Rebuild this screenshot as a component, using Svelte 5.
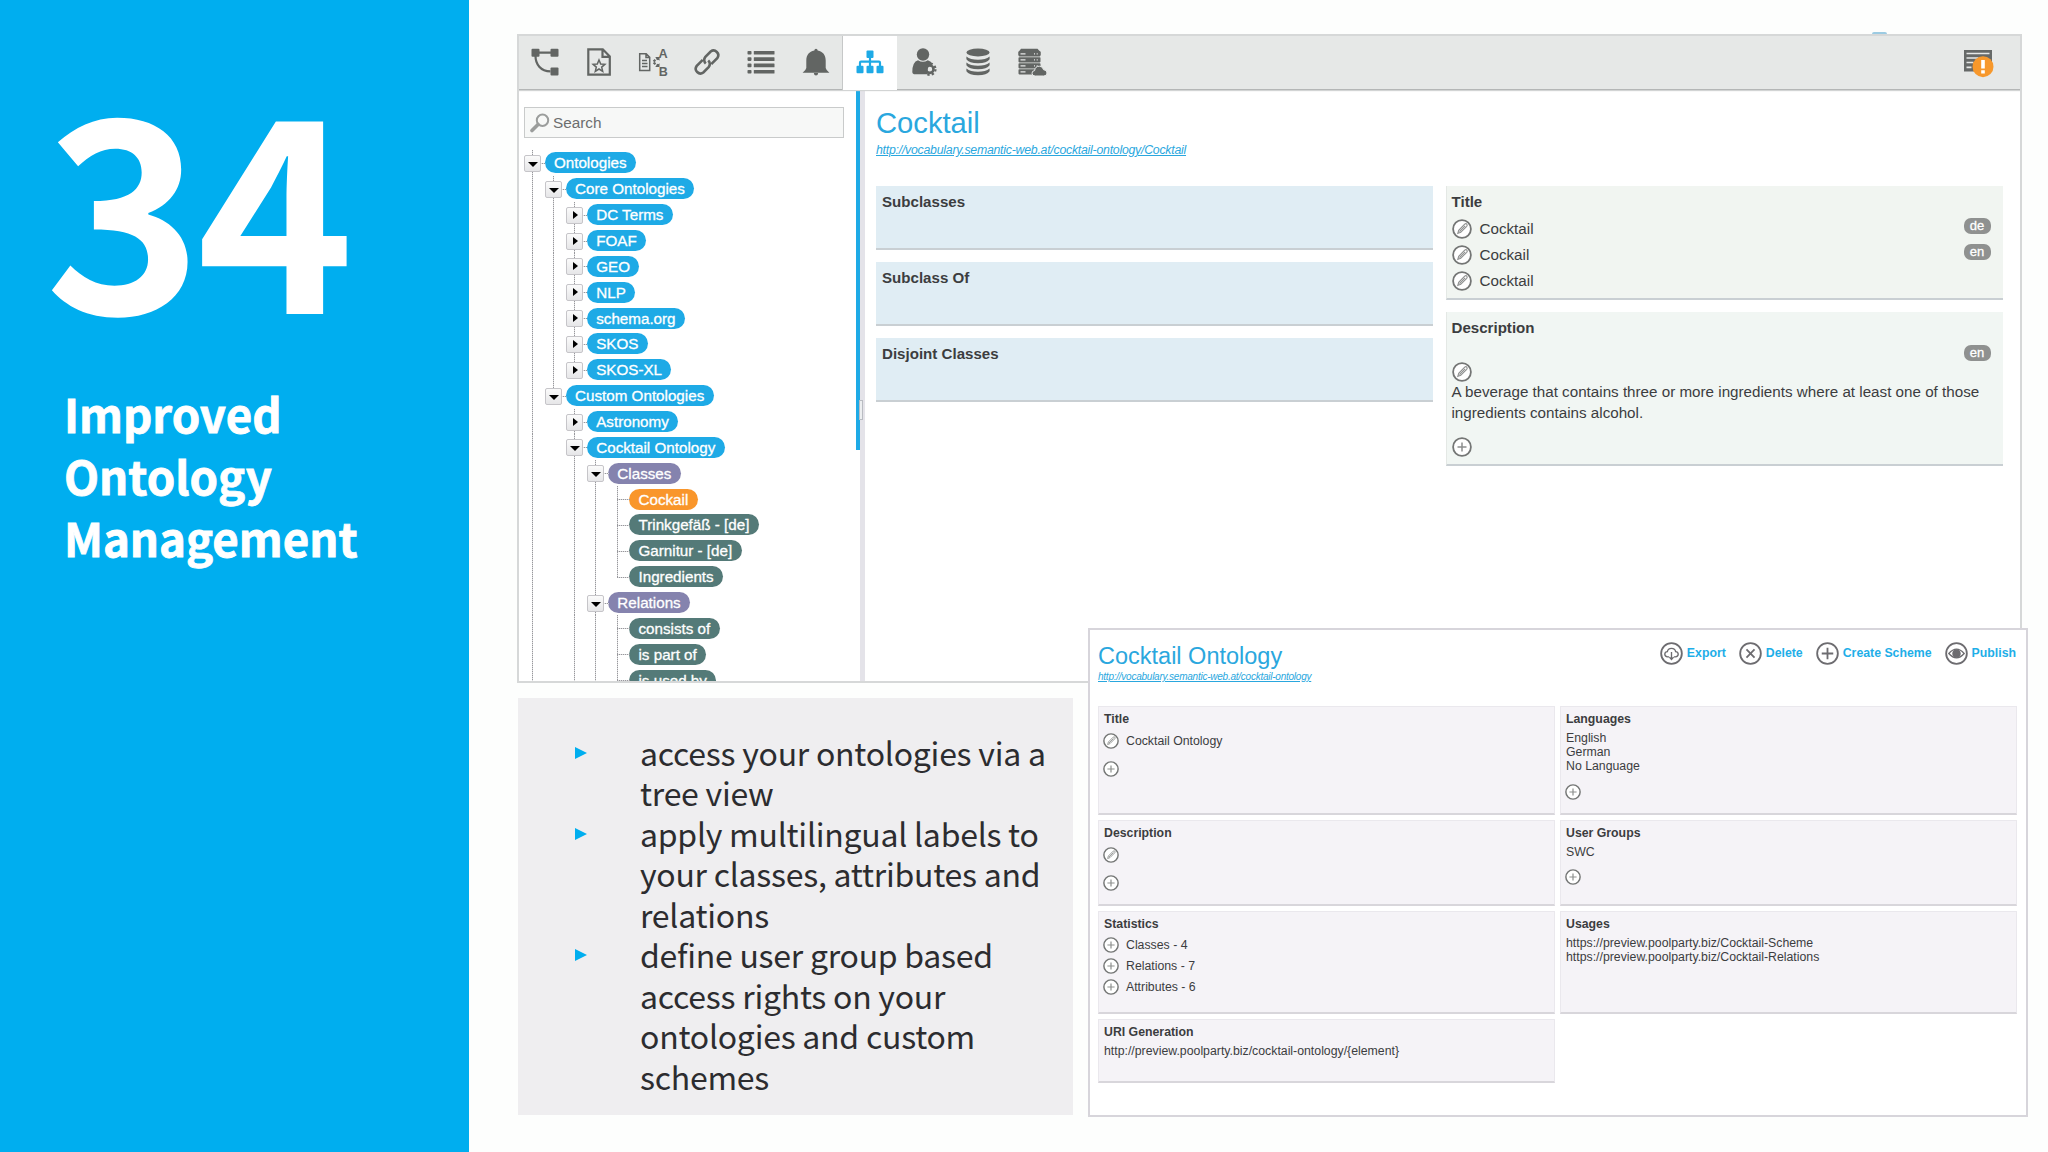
<script lang="ts">
  // guides: one character per tree column, '|' draws the dotted line, '.' leaves it empty
  type Row = { label: string; kind: string; guides: string; toggle: '' | 'open' | 'shut'; end?: boolean }

  const rows: Row[] = [
    { label: 'Ontologies', kind: 'blue', guides: '', toggle: 'open' },
    { label: 'Core Ontologies', kind: 'blue', guides: '|', toggle: 'open' },
    { label: 'DC Terms', kind: 'blue', guides: '||', toggle: 'shut' },
    { label: 'FOAF', kind: 'blue', guides: '||', toggle: 'shut' },
    { label: 'GEO', kind: 'blue', guides: '||', toggle: 'shut' },
    { label: 'NLP', kind: 'blue', guides: '||', toggle: 'shut' },
    { label: 'schema.org', kind: 'blue', guides: '||', toggle: 'shut' },
    { label: 'SKOS', kind: 'blue', guides: '||', toggle: 'shut' },
    { label: 'SKOS-XL', kind: 'blue', guides: '||', toggle: 'shut', end: true },
    { label: 'Custom Ontologies', kind: 'blue', guides: '|', toggle: 'open', end: true },
    { label: 'Astronomy', kind: 'blue', guides: '|.', toggle: 'shut' },
    { label: 'Cocktail Ontology', kind: 'blue', guides: '|.', toggle: 'open' },
    { label: 'Classes', kind: 'purple', guides: '|.|', toggle: 'open' },
    { label: 'Cockail', kind: 'orange', guides: '|.||', toggle: '' },
    { label: 'Trinkgefäß - [de]', kind: 'teal', guides: '|.||', toggle: '' },
    { label: 'Garnitur - [de]', kind: 'teal', guides: '|.||', toggle: '' },
    { label: 'Ingredients', kind: 'teal', guides: '|.||', toggle: '', end: true },
    { label: 'Relations', kind: 'purple', guides: '|.|', toggle: 'open' },
    { label: 'consists of', kind: 'teal', guides: '|.||', toggle: '' },
    { label: 'is part of', kind: 'teal', guides: '|.||', toggle: '' },
    { label: 'is used by', kind: 'teal', guides: '|.||', toggle: '' },
  ]

  const tools = ['graph', 'starred', 'translate', 'link', 'list', 'bell', 'sitemap', 'user', 'database', 'server']
  const relations = ['Subclasses', 'Subclass Of', 'Disjoint Classes']
  const titles = [
    { text: 'Cocktail', lang: 'de' },
    { text: 'Cockail', lang: 'en' },
    { text: 'Cocktail', lang: '' },
  ]
  const actions = [
    { icon: 'cloud', label: 'Export' },
    { icon: 'cross', label: 'Delete' },
    { icon: 'plus', label: 'Create Scheme' },
    { icon: 'eye', label: 'Publish' },
  ]
  const stats = ['Classes - 4', 'Relations - 7', 'Attributes - 6']
</script>

{#snippet edit()}
  <svg class="round" viewBox="0 0 20 20">
    <circle cx="10" cy="10" r="8.9" />
    <path class="pencil" d="M5.8 14.4l.9-3.1 6-6.1q1.2-1 2.1 0t-.1 2.1l-6 6z" />
    <path class="pencil" d="M7.5 12.6l5.6-5.7" />
  </svg>
{/snippet}

{#snippet plus()}
  <svg class="round" viewBox="0 0 20 20">
    <circle cx="10" cy="10" r="8.9" />
    <path class="cross" d="M10 5.5v9M5.5 10h9" />
  </svg>
{/snippet}

{#snippet toolIcon(name: string)}
  <svg class="tool-icon" viewBox="0 0 32 32">
    {#if name === 'graph'}
      <rect x="2.5" y="2.7" width="8" height="8" rx="1" />
      <rect x="21.5" y="2.7" width="8" height="8" rx="1" />
      <rect x="21.5" y="21.5" width="8" height="8" rx="1" />
      <path class="line" d="M10 6.7h12M6.5 10c0 8 5 15.3 15 15.3" />
    {:else if name === 'starred'}
      <path class="line" d="M5.3 3.3h14.5l7 7.2v18.2H5.3zM19.5 3.5v7.3h7" />
      <path class="line thin" d="M16 14l1.7 4 4.2.3-3.2 2.8 1 4.2-3.7-2.3-3.7 2.3 1-4.2-3.2-2.8 4.2-.3z" />
    {:else if name === 'translate'}
      <path class="line thin" d="M2.7 7.7h6.5l3.5 3.7v13H2.7zM9 8v3.6h3.5M5 14.5h5M5 17.5h5.5M5 20.5h5.500" />
      <path class="line" d="M22 12.5c-3 .5-4.5 2-5.8 3.500 1.3 1.5 2.8 3 5.8 3.5" stroke-dasharray="2.5 1.3" />
      <path d="M18 11h4.500v3.800zM18 21h4.500v-3.800z" />
      <text x="21.500" y="11.700" font-size="12.700">A</text>
      <text x="21.700" y="29.700" font-size="12.500">B</text>
    {:else if name === 'link'}
      <g transform="rotate(-45 16 16)">
        <path class="line bold" d="M14.5 11.5H6a4.7 4.7 0 0 0 0 9.3h7.5a4.7 4.7 0 0 0 4.4-5" />
        <path class="line bold" d="M17.5 20.5H26a4.7 4.7 0 0 0 0-9.3h-7.5a4.7 4.7 0 0 0-4.4 5" />
      </g>
    {:else if name === 'list'}
      {#each [5, 11.3, 17.6, 23.9] as y}
        <rect x="2.5" {y} width="4" height="3.6" rx=".8" />
        <rect x="8.8" {y} width="20.7" height="3.6" rx=".5" />
      {/each}
    {:else if name === 'bell'}
      <path d="M16 2.7q1.5 0 1.7 1.8c5.2 1 8 4.5 8 10v7.5q.3 2 3.7 4.7H2.6q3.4-2.7 3.7-4.7v-7.5c0-5.5 2.8-9 8-10q.2-1.8 1.7-1.8zM13.8 27h4.4q-.3 2.500-2.2 2.500T13.8 27z" />
    {:else if name === 'sitemap'}
      <rect x="12.500" y="4.500" width="7" height="7.500" rx="1" />
      <rect x="2.500" y="19.800" width="7" height="7.500" rx="1" />
      <rect x="12.500" y="19.800" width="7" height="7.500" rx="1" />
      <rect x="22.500" y="19.800" width="7" height="7.500" rx="1" />
      <path class="line" d="M16 11v9M6 20v-3.300q0-1 1-1h18q1 0 1 1V20" />
    {:else if name === 'user'}
      <circle cx="15" cy="8.500" r="6.200" />
      <path d="M10 14.2q5 3.3 9.8 0 3.6 1 4.5 4-6 1.8-4.500 10H6q-1.500-.3-1.700-2 0-10.500 5.700-12z" />
      <circle class="line bold" cx="21.800" cy="23.200" r="3.700" />
      <circle class="line" cx="21.800" cy="23.200" r="5.700" stroke-dasharray="2.300 2.176" />
    {:else if name === 'database'}
      <ellipse cx="16" cy="6.500" rx="11.600" ry="3.900" />
      {#each [10, 16, 22] as y}
        <path transform="translate(0 {y})" d="M4.4.5q4 3.3 11.6 3.3T27.6.5v2.7q-2.6 4.1-11.6 4.1T4.4 3.2z" />
      {/each}
    {:else if name === 'server'}
      <path d="M5 2.700h16.500l3 3.300v3H2.500V6z" />
      {#each [5.2, 11.2, 17.2, 23.2] as y}
        <rect x="2.500" {y} width="22" height="5.200" rx=".8" />
        <path class="slot" d="M4.500 {y + 2.7}h5M18 {y + 2.7}h1M20.700 {y + 2.7}h1" />
      {/each}
      <path class="cloud" d="M19.3 30q-3.3 0-3.3-2.8 0-2.4 2.6-2.6.5-4.4 4.7-4.4 3.5 0 4.2 3.5 3.5.2 3.5 3.3 0 3-3.3 3z" />
    {/if}
  </svg>
{/snippet}

<div class="slide">
  <section class="cover">
    <div class="number">34</div>
    <h1>Improved<br />Ontology<br />Management</h1>
  </section>

  <section class="content">
    <div class="window">
      <div class="toolbar">
        {#each tools as name}
          <div class="tool" class:active={name === 'sitemap'}>{@render toolIcon(name)}</div>
        {/each}
        <svg class="notice" viewBox="0 0 30 28">
          <path fill="#666968" d="M0 0h28v21.5H0z" />
          <path stroke="#e6e8e7" stroke-width="1.7" d="M2.5 3.5h23M2.5 8h12M2.5 12.5h7M2.5 17.3h5" />
          <circle cx="19" cy="16.7" r="10.5" fill="#f7982c" />
          <path stroke="#fff" stroke-width="3.6" d="M19 10v8.5M19 20.2v3.3" />
        </svg>
      </div>
      <div class="panes">
        <aside class="sidebar">
          <div class="search">
            <svg class="lens" viewBox="0 0 20 20">
              <circle cx="12.5" cy="7.3" r="5.7" />
              <path d="M8 11.5l-6 6" />
            </svg>
            <span>Search</span>
          </div>
          <div class="tree">
            {#each rows as row}
              <div class="row">
                {#each row.guides as g}
                  <span class="col" class:guide={g === '|'}></span>
                {/each}
                <span class="col branch guide" class:half={row.end}>
                  {#if row.toggle}
                    <span class="toggle {row.toggle}"></span>
                  {/if}
                </span>
                <span class="pill {row.kind}">{row.label}</span>
              </div>
            {/each}
          </div>
        </aside>
        <div class="splitter"><span class="track"></span><span class="grip"></span></div>
        <main class="detail">
          <h2>Cocktail</h2>
          <span class="uri">http://vocabulary.semantic-web.at/cocktail-ontology/Cocktail</span>
          <div class="boxes">
            <div class="stack">
              {#each relations as name}
                <div class="box relation"><h3>{name}</h3></div>
              {/each}
            </div>
            <div class="stack">
              <div class="box label-box">
                <h3>Title</h3>
                {#each titles as t}
                  <div class="entry">
                    {@render edit()}
                    <span>{t.text}</span>
                    {#if t.lang}<span class="lang">{t.lang}</span>{/if}
                  </div>
                {/each}
              </div>
              <div class="box desc-box">
                <h3>Description</h3>
                <div class="lang-line"><span class="lang">en</span></div>
                {@render edit()}
                <p>A beverage that contains three or more ingredients where at least one of those<br />ingredients contains alcohol.</p>
                {@render plus()}
              </div>
            </div>
          </div>
        </main>
      </div>
    </div>

    <ul class="points">
      <li>access your ontologies via a<br />tree view</li>
      <li>apply multilingual labels to<br />your classes, attributes and<br />relations</li>
      <li>define user group based<br />access rights on your<br />ontologies and custom<br />schemes</li>
    </ul>
  </section>

  <span class="dot"></span>

  <div class="popup">
    <header>
      <div>
        <h2>Cocktail Ontology</h2>
        <span class="uri">http://vocabulary.semantic-web.at/cocktail-ontology</span>
      </div>
      <div class="actions">
        {#each actions as a}
          <span class="action">
            <svg class="action-icon" viewBox="0 0 24 24">
              <circle cx="12" cy="12" r="10.8" />
              {#if a.icon === 'cloud'}
                <path class="fine" d="M9.5 15.5H8q-3-.2-3-2.7t2.7-2.7Q8.2 6.7 12 6.7t4.3 3.4Q19 10.3 19 12.8t-3 2.7h-1.5" />
                <path class="fine" d="M12 10.5v7.5M9.8 15.8L12 18.2l2.2-2.4" />
              {:else if a.icon === 'cross'}
                <path d="M7.8 7.8l8.4 8.4M16.2 7.8l-8.4 8.4" />
              {:else if a.icon === 'plus'}
                <path d="M12 6v12M6 12h12" />
              {:else}
                <path class="fine" d="M4 12q8-9 16 0-8 9-16 0z" />
                <circle class="pupil" cx="12" cy="12" r="3.5" />
              {/if}
            </svg>
            {a.label}
          </span>
        {/each}
      </div>
    </header>
    <div class="cards">
      <div class="card">
        <h3>Title</h3>
        <div class="entry first">{@render edit()}<span>Cocktail Ontology</span></div>
        <div class="entry gap-a">{@render plus()}</div>
      </div>
      <div class="card">
        <h3>Languages</h3>
        <p>English<br />German<br />No Language</p>
        <div class="entry gap-b">{@render plus()}</div>
      </div>
      <div class="card">
        <h3>Description</h3>
        <div class="entry first">{@render edit()}</div>
        <div class="entry gap-a">{@render plus()}</div>
      </div>
      <div class="card">
        <h3>User Groups</h3>
        <p>SWC</p>
        <div class="entry gap-b">{@render plus()}</div>
      </div>
      <div class="card">
        <h3>Statistics</h3>
        <div class="stats">
          {#each stats as s}
            <div class="entry">{@render plus()}<span>{s}</span></div>
          {/each}
        </div>
      </div>
      <div class="card">
        <h3>Usages</h3>
        <p>https://preview.poolparty.biz/Cocktail-Scheme<br />https://preview.poolparty.biz/Cocktail-Relations</p>
      </div>
      <div class="card">
        <h3>URI Generation</h3>
        <p>http://preview.poolparty.biz/cocktail-ontology/&#123;element&#125;</p>
      </div>
    </div>
  </div>
</div>

<style>
  :global(body) {
    margin: 0;
    background: #fdfefd;
  }
  .slide {
    position: relative;
    display: flex;
    width: 2048px;
    height: 1152px;
    overflow: hidden;
    background: #fdfefd;
    font-family: 'Liberation Sans', Arial, sans-serif;
    color: #3c3d3f;
  }
  h1, h2, h3, p, ul {
    margin: 0;
    padding: 0;
    font-weight: normal;
  }

  /* blue cover column */
  .cover {
    box-sizing: border-box;
    width: 469px;
    padding-top: 64px;
    background: #00aeef;
    color: #fff;
    font-family: 'Noto Sans CJK SC', sans-serif;
    flex-shrink: 0;
  }
  .number {
    margin-left: 45px;
    font-size: 267px;
    line-height: 267px;
    font-weight: 700;
    letter-spacing: -6px;
  }
  h1 {
    margin: 51px 0 0 64px;
    font-size: 45.6px;
    line-height: 62px;
    font-weight: 700;
    -webkit-text-stroke: 0.8px #fff;
  }

  .content {
    display: flex;
    flex-direction: column;
    padding: 34px 0 0 48px;
  }
  .window {
    box-sizing: border-box;
    width: 1505px;
    height: 649px;
    border: 2px solid #d6d8d8;
    background: #fff;
    overflow: hidden;
  }
  .toolbar {
    display: flex;
    align-items: center;
    box-sizing: border-box;
    height: 54px;
    background: #e6e8e7;
    border-bottom: 1px solid #b4b6b6;
    box-shadow: 0 1px 1px #d2d4d4;
    position: relative;
    z-index: 1;
  }
  .tool {
    display: flex;
    align-items: center;
    justify-content: center;
    width: 54.1px;
    height: 54px;
    position: relative;
    left: -1px;
  }
  .tool.active {
    background: #fff;
    box-shadow: -1px 0 0 #c6c8c8;
  }
  .tool-icon {
    width: 32px;
    height: 32px;
    margin-bottom: 2px;
    fill: #626563;
    stroke: none;
  }
  .active .tool-icon {
    fill: #1eaae6;
  }
  .tool-icon .line {
    fill: none;
    stroke: #626563;
    stroke-width: 2.2;
  }
  .active .tool-icon .line {
    stroke: #1eaae6;
  }
  .tool-icon .line.thin {
    stroke-width: 1.5;
  }
  .tool-icon .line.bold {
    stroke-width: 2.6;
  }
  .tool-icon text {
    font-weight: 700;
  }
  .slot {
    stroke: #e6e8e7;
    stroke-width: 1.2;
  }
  .cloud {
    stroke: #e6e8e7;
    stroke-width: 1;
  }
  .notice {
    width: 30px;
    height: 28px;
    margin: 3px 26px 0 auto;
  }

  .panes {
    display: flex;
    height: 591px;
  }
  .sidebar {
    width: 337px;
    flex-shrink: 0;
  }
  .search {
    display: flex;
    align-items: center;
    gap: 3px;
    box-sizing: border-box;
    width: 320px;
    height: 31px;
    margin: 17px 0 0 5px;
    padding-left: 5px;
    border: 1px solid #c9cbcb;
    background: #f7f8f7;
    font-size: 15.3px;
    color: #6c6e6e;
  }
  .lens {
    width: 20px;
    height: 20px;
    fill: none;
    stroke: #9b9d9c;
    stroke-width: 2;
  }
  .lens path {
    stroke-width: 3.6;
    stroke-linecap: round;
  }
  .tree {
    margin: 12px 0 0 3px;
  }
  .row {
    display: flex;
    align-items: center;
    height: 25.86px;
  }
  .col {
    position: relative;
    width: 21.15px;
    height: 100%;
    flex-shrink: 0;
  }
  .col.guide::before {
    content: '';
    position: absolute;
    left: 10px;
    top: 0;
    width: 1px;
    height: 100%;
    background: repeating-linear-gradient(#98989c 0 1px, #dcdcde 1px 2px);
  }
  .col.half::before {
    height: 50%;
  }
  .branch {
    margin-right: 1.5px;
  }
  .branch::after {
    content: '';
    position: absolute;
    left: 10px;
    right: -2px;
    top: 50%;
    height: 1px;
    background: repeating-linear-gradient(to right, #98989c 0 1px, #dcdcde 1px 2px);
  }
  .toggle {
    position: absolute;
    z-index: 1;
    left: 2px;
    top: 5px;
    width: 15px;
    height: 15px;
    border: 1px solid #c6c5c9;
    border-radius: 2px;
    background: linear-gradient(#fbfbfb, #e6e6e8);
  }
  .toggle::after {
    content: '';
    position: absolute;
  }
  .toggle.open::after {
    left: 3px;
    top: 6px;
    border: 5px solid transparent;
    border-top: 5px solid #000;
    border-bottom: 0;
  }
  .toggle.shut::after {
    left: 6px;
    top: 3px;
    border: 4.5px solid transparent;
    border-left: 5px solid #000;
    border-right: 0;
  }
  .pill {
    height: 21px;
    line-height: 21px;
    padding: 0 9.3px;
    border-radius: 11px;
    font-size: 15.2px;
    color: #fff;
    white-space: nowrap;
    -webkit-text-stroke: 0.3px #fff;
  }
  .pill.blue {
    background: #1eaae6;
  }
  .pill.purple {
    background: #8583ae;
  }
  .pill.orange {
    background: #f9962b;
  }
  .pill.teal {
    background: #547a78;
  }

  .splitter {
    position: relative;
    width: 9px;
    background: #e4e3e9;
    flex-shrink: 0;
  }
  .track {
    display: block;
    width: 4px;
    height: 360px;
    background: #1eaae6;
  }
  .splitter::after {
    content: '';
    position: absolute;
    left: 0;
    top: 360px;
    bottom: 0;
    width: 4px;
    background: #fff;
  }
  .grip {
    position: absolute;
    z-index: 1;
    left: 3px;
    top: 310px;
    width: 2px;
    height: 18px;
    border: 1px solid #b9bcc2;
    background: #eceef0;
  }

  .detail {
    padding: 17px 0 0 11px;
  }
  h2 {
    font-size: 29.2px;
    line-height: 33px;
    color: #2aa7de;
  }
  .uri {
    display: block;
    padding-top: 3px;
    font-size: 12.3px;
    line-height: 14px;
    letter-spacing: -0.24px;
    font-style: italic;
    text-decoration: underline;
    color: #2aa7de;
  }
  .boxes {
    display: flex;
    gap: 12.5px;
    margin-top: 29px;
  }
  .stack {
    display: flex;
    flex-direction: column;
    gap: 12.2px;
    width: 557px;
  }
  .box {
    box-sizing: border-box;
    padding: 0 6px;
    border-bottom: 2px solid #c9cfd3;
    font-size: 15.2px;
  }
  .relation {
    height: 64px;
    background: #e0edf4;
  }
  .box h3 {
    padding-top: 7px;
    font-size: 15.1px;
    line-height: 18px;
    font-weight: 700;
  }
  .label-box,
  .desc-box {
    padding-left: 5px;
    background: #f1f5f1;
    border-left: 1px solid #e4e8e5;
  }
  .label-box {
    height: 114px;
  }
  .desc-box {
    height: 154px;
    background: #f1f6f3;
  }
  .label-box h3 {
    padding-bottom: 5px;
  }
  .entry {
    display: flex;
    align-items: center;
  }
  .label-box .entry {
    height: 25.86px;
    gap: 8px;
  }
  .round {
    display: block;
    width: 20px;
    height: 20px;
    fill: #fff;
    stroke: #747675;
    stroke-width: 1.8;
    flex-shrink: 0;
  }
  .round .pencil {
    fill: none;
    stroke: #8d8f8e;
    stroke-width: 1.1;
  }
  .round .cross {
    stroke: #8d8f8e;
    stroke-width: 1.5;
  }
  .lang {
    width: 27px;
    height: 16px;
    margin: -5px 6px 0 auto;
    border-radius: 7px;
    background: #8f9190;
    color: #fff;
    font-size: 13px;
    line-height: 15px;
    text-align: center;
    -webkit-text-stroke: 0.3px #fff;
  }
  .lang-line {
    display: flex;
    padding-top: 13px;
    height: 12px;
  }
  .desc-box p {
    line-height: 21px;
    margin: -1px 0 14px;
    white-space: nowrap;
  }

  /* summary box below the window */
  .points {
    box-sizing: border-box;
    width: 555px;
    height: 417px;
    margin: 15px 0 0 1px;
    padding: 34px 0 0 122px;
    background: #efeef0;
    list-style: none;
    font-family: 'Noto Sans CJK SC', sans-serif;
    font-size: 32px;
    line-height: 40.45px;
    letter-spacing: -0.25px;
    color: #2c2c2f;
    white-space: nowrap;
  }
  .points li {
    position: relative;
  }
  .points li::before {
    content: '';
    position: absolute;
    left: -65px;
    top: 15px;
    border: 6.5px solid transparent;
    border-left: 12px solid #00aeef;
    border-right: 0;
  }
  .dot {
    position: absolute;
    left: 1872px;
    top: 32px;
    width: 15px;
    height: 2px;
    border-radius: 8px 8px 0 0;
    background: #9ccbe2;
  }

  .popup {
    position: absolute;
    left: 1088px;
    top: 628px;
    box-sizing: border-box;
    width: 940px;
    height: 489px;
    padding: 11px 0 0 8px;
    border: 2px solid #d7d5db;
    background: #fff;
    font-size: 12.3px;
  }
  .popup header {
    display: flex;
    justify-content: space-between;
    height: 65px;
    padding-right: 10px;
  }
  .popup h2 {
    padding-top: 1px;
    font-size: 23.5px;
    line-height: 28px;
  }
  .popup .uri {
    padding-top: 0;
    font-size: 10px;
    line-height: 14px;
  }
  .actions {
    display: flex;
    gap: 13px;
    height: 24px;
  }
  .action {
    display: flex;
    align-items: center;
    gap: 4px;
    color: #1eaee8;
    font-weight: 700;
    white-space: nowrap;
  }
  .action-icon {
    width: 23px;
    height: 23px;
    fill: none;
    stroke: #6d6c70;
    stroke-width: 1.9;
  }
  .action-icon .fine {
    stroke-width: 1.4;
  }
  .action-icon .pupil {
    fill: #6d6c70;
  }
  .cards {
    display: grid;
    grid-template-columns: 457px 457px;
    grid-template-rows: 109px 86px 103px 64px;
    column-gap: 5px;
    row-gap: 5px;
  }
  .card {
    box-sizing: border-box;
    padding: 5px 4px 0;
    border: 1px solid #eae8ed;
    border-bottom: 2px solid #d8d6db;
    background: #f5f3f7;
  }
  .card h3 {
    padding-left: 1px;
    font-size: 12.3px;
    line-height: 14px;
    font-weight: 700;
  }
  .card p {
    padding: 4.5px 0 0 1px;
    line-height: 14.4px;
  }
  .card .round {
    width: 16px;
    height: 16px;
  }
  .card .entry {
    height: 16px;
    gap: 7px;
  }
  .card .first {
    margin-top: 7px;
  }
  .card .gap-a {
    margin-top: 12px;
  }
  .card .gap-b {
    margin-top: 10px;
  }
  .stats {
    padding-top: 1px;
  }
  .stats .entry {
    margin-top: 5px;
  }
</style>
